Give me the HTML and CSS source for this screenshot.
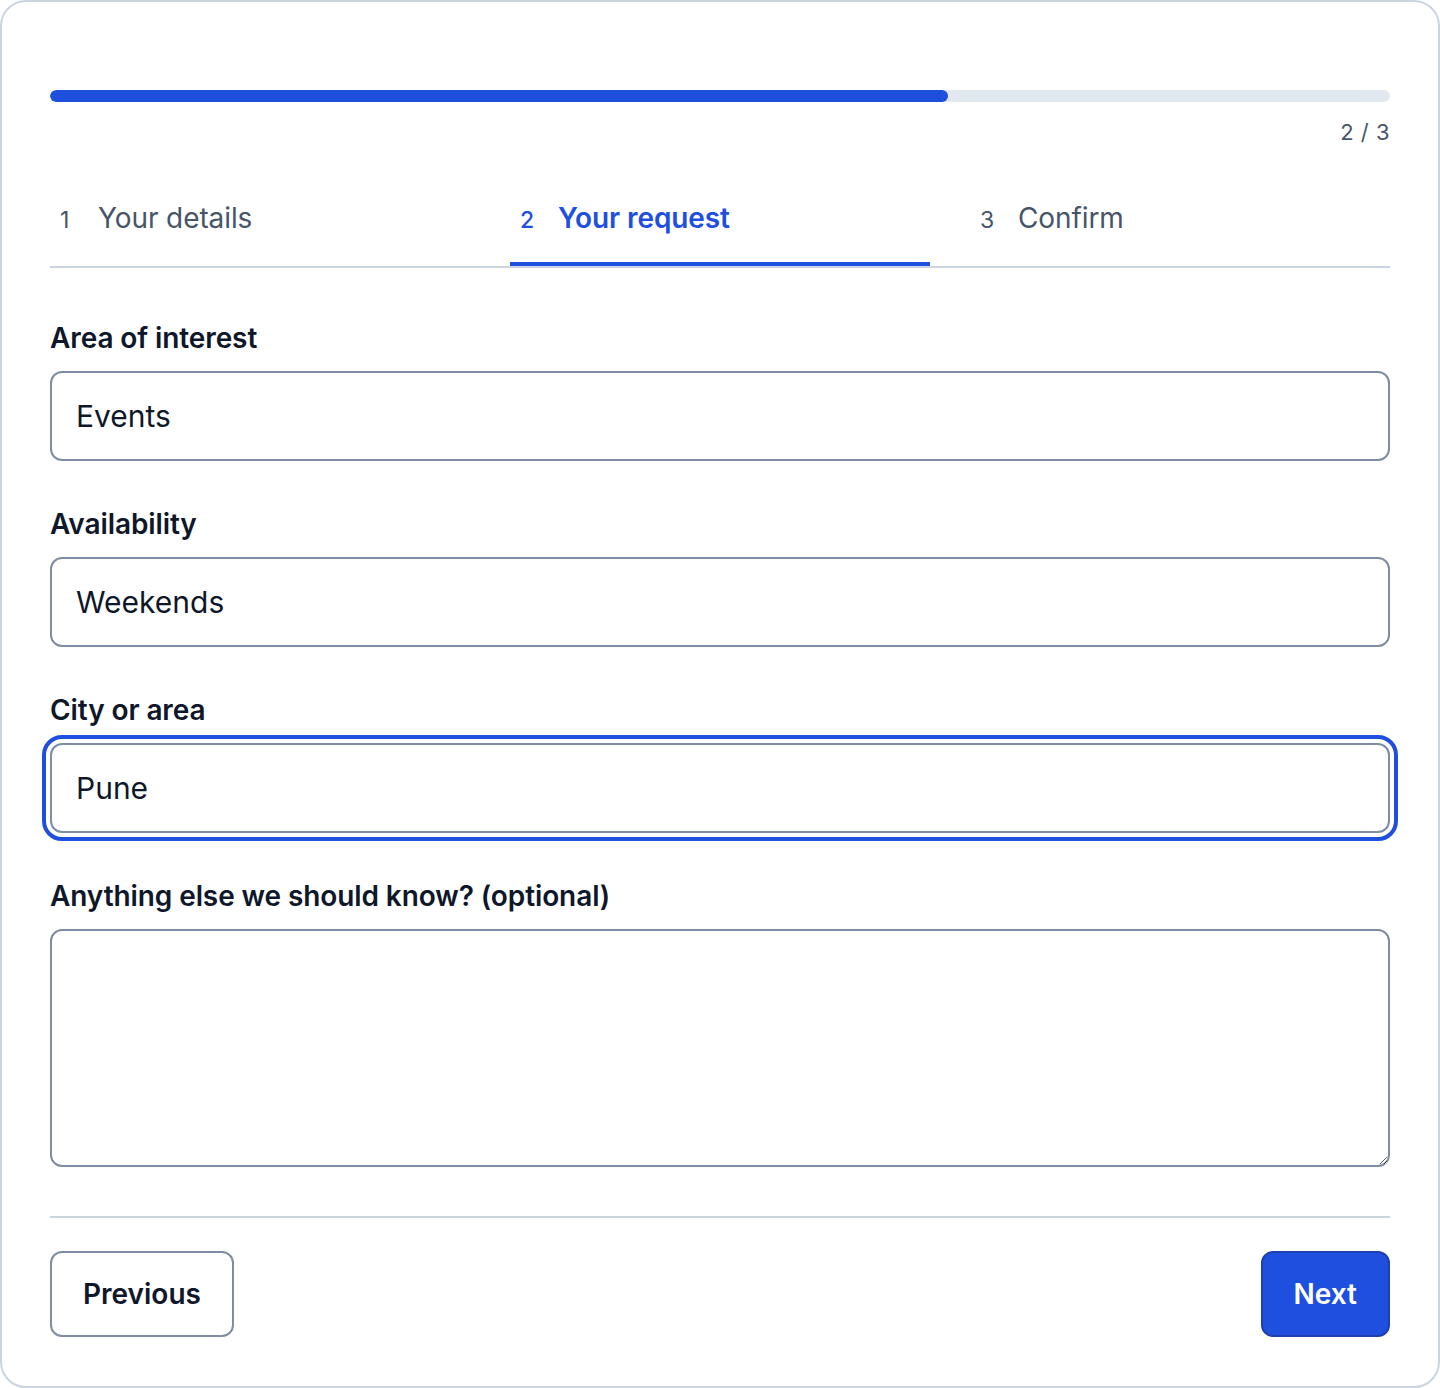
FILE: index.html
```html
<!DOCTYPE html>
<html lang="en">
<head>
<meta charset="utf-8">
<title>Your request</title>
<link rel="stylesheet" href="styles.css">
</head>
<body>
<div class="card">
  <div class="progress"><div class="progress-fill" style="width: 67%"></div></div>
  <div class="count">2 / 3</div>
  <div class="tabs">
    <div class="tab"><span class="num">1</span><span class="tab-label">Your details</span></div>
    <div class="tab active"><span class="num">2</span><span class="tab-label">Your request</span></div>
    <div class="tab"><span class="num">3</span><span class="tab-label">Confirm</span></div>
  </div>
  <form class="form">
    <div class="field">
      <label class="label" for="f1">Area of interest</label>
      <input class="input" id="f1" type="text" value="Events">
    </div>
    <div class="field">
      <label class="label" for="f2">Availability</label>
      <input class="input" id="f2" type="text" value="Weekends">
    </div>
    <div class="field">
      <label class="label" for="f3">City or area</label>
      <input class="input focused" id="f3" type="text" value="Pune">
    </div>
    <div class="field">
      <label class="label" for="f4">Anything else we should know? (optional)</label>
      <textarea class="input textarea" id="f4"></textarea>
    </div>
  </form>
  <div class="footer">
    <button class="btn btn-secondary" type="button">Previous</button>
    <button class="btn btn-primary" type="button">Next</button>
  </div>
</div>
</body>
</html>
```
FILE: styles.css
```css
* { box-sizing: border-box; }
html, body { margin: 0; padding: 0; background: #ffffff; }
body {
  font-family: Inter, "Noto Sans", sans-serif;
  color: #0f172a;
}
.card {
  width: 1440px;
  height: 1388px;
  border: 2px solid #cbd5e1;
  border-radius: 26px;
  padding: 48px;
  background: #ffffff;
}
.progress {
  margin-top: 40px;
  height: 12px;
  border-radius: 6px;
  background: #e2e8f0;
  overflow: hidden;
}
.progress-fill {
  height: 100%;
  background: #1e4fde;
  border-radius: 6px;
}
.count {
  margin-top: 14px;
  text-align: right;
  font-size: 22px;
  line-height: 32px;
  color: #475569;
  letter-spacing: 0.5px;
}
.tabs {
  display: grid;
  grid-template-columns: 1fr 1fr 1fr;
  gap: 40px;
  border-bottom: 2px solid #cbd5e1;
}
.tab {
  display: flex;
  align-items: baseline;
  padding: 50px 10px 24px;
  border-bottom: 4px solid transparent;
  color: #475569;
}
.num {
  font-size: 23px;
  width: 14px;
  margin-right: 24px;
  text-align: left;
}
.tab-label {
  font-size: 28px;
  line-height: 40px;
  letter-spacing: -0.1px;
}
.tab.active {
  color: #1e4fde;
  border-bottom-color: #1e4fde;
}
.tab.active .tab-label { font-weight: 600; }
.tab.active .num { font-weight: 500; }
.form {
  margin-top: 50px;
  display: flex;
  flex-direction: column;
  gap: 43px;
}
.field {
  display: flex;
  flex-direction: column;
}
.label {
  font-size: 28px;
  line-height: 40px;
  font-weight: 600;
  color: #0f172a;
  margin-bottom: 13px;
  letter-spacing: -0.1px;
}
.input {
  display: block;
  width: 100%;
  height: 90px;
  border: 2px solid #7f8ca1;
  border-radius: 12px;
  padding: 0 24px;
  font-family: Inter, "Noto Sans", sans-serif;
  font-size: 30px;
  color: #0f172a;
  background: #ffffff;
  outline: none;
}
.input.focused {
  outline: 4px solid #1e4fde;
  outline-offset: 4px;
}
.textarea {
  height: 238px;
  padding: 20px 24px;
  resize: vertical;
}
.footer {
  margin-top: 49px;
  border-top: 2px solid #cbd5e1;
  padding-top: 33px;
  display: flex;
  justify-content: space-between;
}
.btn {
  height: 86px;
  padding: 0 31px;
  border-radius: 12px;
  font-family: Inter, "Noto Sans", sans-serif;
  font-size: 28px;
  font-weight: 600;
  cursor: pointer;
}
.btn-secondary {
  background: #ffffff;
  border: 2px solid #7f8ca1;
  color: #0f172a;
}
.btn-primary {
  background: #1e4fde;
  border: 2px solid #1e40af;
  color: #ffffff;
}
```
